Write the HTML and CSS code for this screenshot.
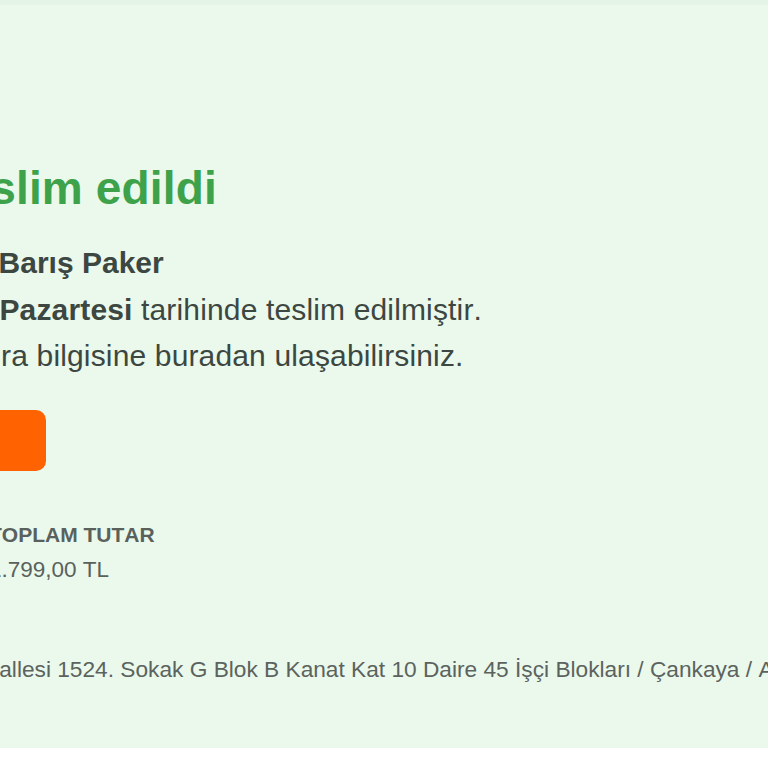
FILE: index.html
```
<!DOCTYPE html>
<html lang="tr">
<head>
<meta charset="utf-8">
<title>Teslim edildi</title>
<link rel="stylesheet" href="styles.css">
</head>
<body>
<div class="strip"></div>
<main class="card">
  <div class="content">
    <h1 class="title">Teslim edildi</h1>
    <div class="name">Sayın <strong>Barış Paker</strong></div>
    <p class="message">Paket <strong>Pazartesi</strong> tarihinde teslim edilmiştir.<br>e-Fatura bilgisine buradan ulaşabilirsiniz.</p>
    <a class="btn" href="#">Fatura</a>
    <div class="summary">
      <div class="cell">
        <div class="label">ADET</div>
        <div class="value">1</div>
      </div>
      <div class="cell">
        <div class="label">TOPLAM TUTAR</div>
        <div class="value">1.799,00 TL</div>
      </div>
    </div>
    <p class="address">İşçi Blokları Mahallesi 1524. Sokak G Blok B Kanat Kat 10 Daire 45 İşçi Blokları / Çankaya / Ankara</p>
  </div>
</main>
</body>
</html>
```
FILE: styles.css
```
html, body {
  margin: 0;
  padding: 0;
  background: #ffffff;
  overflow: hidden;
}
body {
  width: 768px;
  height: 768px;
  font-family: "Liberation Sans", Arial, sans-serif;
  font-kerning: none;
}
.strip {
  height: 5px;
  background: #e4f4e6;
}
.card {
  width: 1400px;
  background: #eaf9ec;
  padding: 157px 0 64px 0;
}
.content {
  margin-left: -86.5px;
}
.title {
  margin: 0;
  padding-left: 22.8px;
  font-size: 46px;
  line-height: 52px;
  font-weight: 700;
  letter-spacing: 0.15px;
  color: #3ea24b;
  white-space: nowrap;
}
.name {
  margin-top: 26px;
  font-size: 30px;
  line-height: 46px;
  color: #3d4741;
  white-space: nowrap;
}
.name strong {
  font-weight: 700;
}
.message {
  margin: 1px 0 0;
  font-size: 30px;
  line-height: 46px;
  letter-spacing: 0.15px;
  color: #3d4741;
  white-space: nowrap;
}
.message strong {
  font-weight: 700;
}
.btn {
  display: block;
  width: fit-content;
  margin-top: 31px;
  height: 61px;
  line-height: 61px;
  padding: 0 62px 0 22px;
  border-radius: 10px;
  background: #ff6200;
  color: #ffffff;
  font-size: 16px;
  font-weight: 700;
  text-decoration: none;
}
.summary {
  display: flex;
  gap: 18.3px;
  margin-top: 50px;
}
.label {
  font-size: 21px;
  line-height: 28px;
  font-weight: 700;
  color: #5a615c;
  white-space: nowrap;
}
.value {
  margin-top: 6px;
  font-size: 22.5px;
  line-height: 30px;
  color: #5a615c;
  white-space: nowrap;
}
.address {
  margin: 69px 0 0 -80.7px;
  font-size: 22.7px;
  line-height: 30px;
  color: #5c635e;
  white-space: nowrap;
}
```
